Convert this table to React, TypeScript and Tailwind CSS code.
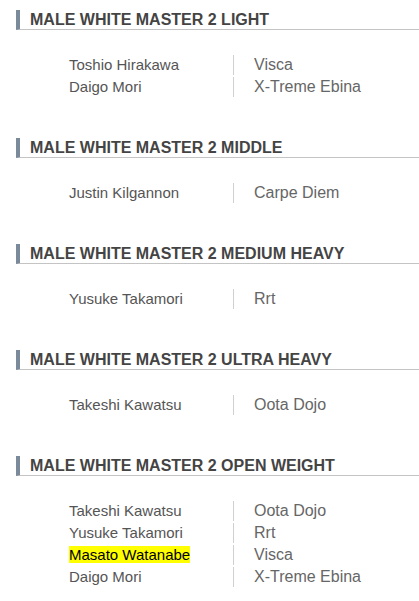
import React from "react";

type Row = { name: string; club: string; hl?: boolean };
const sections: { title: string; rows: Row[] }[] = [
  { title: "MALE WHITE MASTER 2 LIGHT", rows: [{ name: "Toshio Hirakawa", club: "Visca" }, { name: "Daigo Mori", club: "X-Treme Ebina" }] },
  { title: "MALE WHITE MASTER 2 MIDDLE", rows: [{ name: "Justin Kilgannon", club: "Carpe Diem" }] },
  { title: "MALE WHITE MASTER 2 MEDIUM HEAVY", rows: [{ name: "Yusuke Takamori", club: "Rrt" }] },
  { title: "MALE WHITE MASTER 2 ULTRA HEAVY", rows: [{ name: "Takeshi Kawatsu", club: "Oota Dojo" }] },
  {
    title: "MALE WHITE MASTER 2 OPEN WEIGHT",
    rows: [
      { name: "Takeshi Kawatsu", club: "Oota Dojo" },
      { name: "Yusuke Takamori", club: "Rrt" },
      { name: "Masato Watanabe", club: "Visca", hl: true },
      { name: "Daigo Mori", club: "X-Treme Ebina" },
    ],
  },
];

export default function App() {
  return (
    <div className="w-[419px] h-[601px] bg-white overflow-hidden pt-[10px]" style={{ fontFamily: '"Liberation Sans", Arial, sans-serif' }}>
      {sections.map((s) => (
        <div key={s.title} className="mb-[41px]">
          <div className="ml-[16px] border-l-4 border-[#7b8a9a] border-b border-b-[#c4c4c4] pl-[10px] h-[20px] flex items-center">
            <span className="text-[16px] font-bold text-[#444] leading-[19px]">{s.title}</span>
          </div>
          <div className="mt-[25px] flex flex-col gap-[2px]">
            {s.rows.map((r, i) => (
              <div key={i} className="flex h-[20px] items-center leading-[20px]">
                <div className="w-[164px] ml-[69px] shrink-0 text-[15px] text-[#555]">
                  {r.hl ? <span className="bg-[#ffff00] text-black">{r.name}</span> : r.name}
                </div>
                <div className="border-l border-[#d0d0d0] h-[20px] pl-[20px] text-[16px] text-[#666]">{r.club}</div>
              </div>
            ))}
          </div>
        </div>
      ))}
    </div>
  );
}
